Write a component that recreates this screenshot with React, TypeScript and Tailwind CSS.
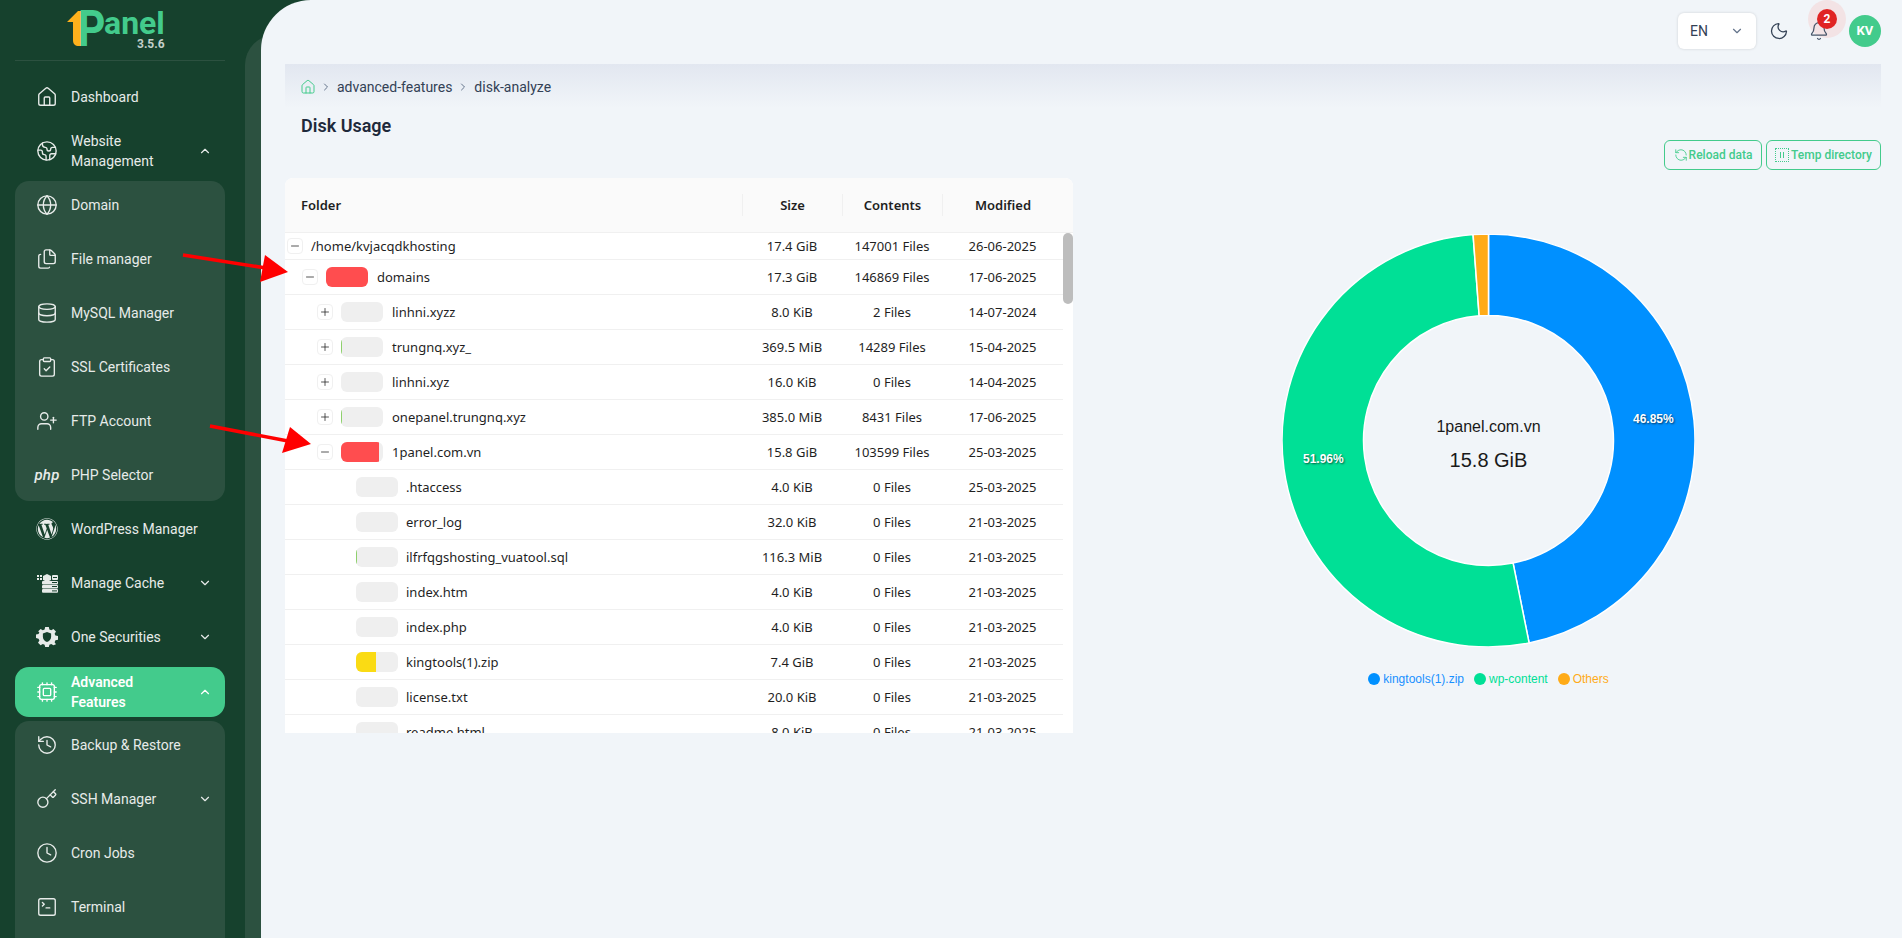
import { useState } from "react";
import {
  House,
  Earth,
  Globe,
  Files,
  Database,
  ClipboardCheck,
  UserPlus,
  ChevronDown,
  ChevronUp,
  ChevronRight,
  Cpu,
  History,
  Key,
  Clock,
  SquareTerminal,
  Moon,
  Bell,
  RefreshCcw,
  Plus,
  Minus,
} from "lucide-react";
import { FaWordpress } from "react-icons/fa";

function CacheIcon() {
  return (
    <svg viewBox="0 0 21 19" className="w-[21px] h-[19px]" fill="currentColor">
      <rect x="0" y="1" width="2" height="2" />
      <rect x="0" y="4" width="2" height="2" />
      <rect x="3" y="1" width="2" height="2" />
      <rect x="3" y="4" width="2" height="2" />
      <path d="M10 0l4 2v4l-4 2-4-2V2z" />
      <rect x="15" y="1" width="6" height="5" rx="1" />
      <rect x="5" y="7" width="16" height="3.4" rx="1" />
      <rect x="5" y="11" width="16" height="3.4" rx="1" />
      <rect x="5" y="15" width="16" height="3.8" rx="1" />
      <g fill="#16412d">
        <rect x="16" y="3" width="4" height="1" />
        <rect x="15" y="8" width="5" height="1" />
        <rect x="15" y="12" width="5" height="1" />
        <rect x="15" y="16.4" width="5" height="1" />
      </g>
    </svg>
  );
}

function SecurityIcon() {
  return (
    <svg viewBox="-1 -1 24 24" className="w-[22px] h-[22px]" fill="currentColor">
      <path
        fillRule="evenodd"
        d="M9 0h4l.6 2.8 2 .9L18 2.2l2.8 2.8-1.5 2.4.9 2 2.8.6v4l-2.8.6-.9 2 1.5 2.4L18 20l-2.4-1.5-2 .9L13 22H9l-.6-2.6-2-.9L4 20l-2.8-2.8 1.5-2.4-.9-2L-1 12.2v-4l2.8-.6.9-2L1.2 5 4 2.2l2.4 1.5 2-.9L9 0zm2 5.5-4.5 1.7v3.6c0 2.8 1.9 4.7 4.5 5.7 2.6-1 4.5-2.9 4.5-5.7V7.2L11 5.5z"
      />
    </svg>
  );
}

type NavItem = {
  label: string;
  icon: React.ReactNode;
  chevron?: "up" | "down";
  active?: boolean;
  wrap?: boolean;
};

const iconCls = "w-[22px] h-[22px]";

const websiteSub: NavItem[] = [
  { label: "Domain", icon: <Globe className={iconCls} strokeWidth={1.5} /> },
  { label: "File manager", icon: <Files className={iconCls} strokeWidth={1.5} /> },
  { label: "MySQL Manager", icon: <Database className={iconCls} strokeWidth={1.5} /> },
  { label: "SSL Certificates", icon: <ClipboardCheck className={iconCls} strokeWidth={1.5} /> },
  { label: "FTP Account", icon: <UserPlus className={iconCls} strokeWidth={1.5} /> },
  {
    label: "PHP Selector",
    icon: <span className="italic font-medium text-[15px] tracking-[0.2px]">php</span>,
  },
];

const advancedSub: NavItem[] = [
  { label: "Backup & Restore", icon: <History className={iconCls} strokeWidth={1.5} /> },
  { label: "SSH Manager", icon: <Key className={iconCls} strokeWidth={1.5} />, chevron: "down" },
  { label: "Cron Jobs", icon: <Clock className={iconCls} strokeWidth={1.5} /> },
  { label: "Terminal", icon: <SquareTerminal className={iconCls} strokeWidth={1.5} /> },
];

function NavRow({ item }: { item: NavItem }) {
  return (
    <div
      className={`flex items-center h-[54px] shrink-0 pl-[20px] pr-[13px] text-[14px] leading-[20px] ${
        item.active ? "text-white font-semibold" : "text-[#e7ebe9]"
      }`}
    >
      <span className="w-[24px] flex justify-center shrink-0">{item.icon}</span>
      <span className="ml-[12px] flex-1">
        <span className={item.wrap ? "block w-[100px]" : ""}>{item.label}</span>
      </span>
      {item.chevron === "up" && <ChevronUp className="w-[14px] h-[14px]" />}
      {item.chevron === "down" && <ChevronDown className="w-[14px] h-[14px]" />}
    </div>
  );
}

function Sidebar() {
  return (
    <aside className="w-[261px] shrink-0 h-[938px] overflow-hidden bg-[#16412d] font-['Roboto',sans-serif] relative">
      {/* Logo */}
      <div className="h-[61px] mx-[15px] w-[210px] border-b border-[#2c5140] pl-[52px] pt-[8px]">
        <div className="relative w-[100px] h-[44px]">
          <svg viewBox="0 0 14 36" className="absolute left-0 top-[2px] w-[14px] h-[36px]">
            <path d="M0 12 L11 1 L14 1 L14 36 L12 36 C8 36 6 34 6 30 L6 12 Z" fill="#feb11c" />
          </svg>
          <span className="absolute left-[11px] top-[-7px] text-[50px] leading-[56px] font-bold text-[#43cb8c] origin-left scale-x-[0.85]">
            P
          </span>
          <span className="absolute left-[37px] top-[1px] text-[32px] leading-[28px] font-bold text-[#43cb8c]">
            anel
          </span>
          <span className="absolute left-[70px] top-[30px] text-[12px] leading-[12px] font-bold text-[#c4cfca]">
            3.5.6
          </span>
        </div>
      </div>
      {/* Navigation */}
      <nav className="w-[240px] px-[15px] mt-[9px]">
        <NavRow item={{ label: "Dashboard", icon: <House className={iconCls} strokeWidth={1.5} /> }} />
        <NavRow
          item={{ label: "Website Management", icon: <Earth className={iconCls} strokeWidth={1.5} />, chevron: "up", wrap: true }}
        />
        <div className="bg-[#2c5140] rounded-[14px] mt-[3px] h-[320px] mb-[1px] flex flex-col">
          <div className="-mt-[3px]">
            {websiteSub.map((item) => (
              <NavRow key={item.label} item={item} />
            ))}
          </div>
        </div>
        <NavRow item={{ label: "WordPress Manager", icon: <FaWordpress className={iconCls} /> }} />
        <NavRow item={{ label: "Manage Cache", icon: <CacheIcon />, chevron: "down" }} />
        <NavRow item={{ label: "One Securities", icon: <SecurityIcon />, chevron: "down" }} />
        <div className="bg-[#43cb8c] rounded-[14px] h-[50px] mt-[3px] flex flex-col justify-center">
          <NavRow
            item={{
              label: "Advanced Features",
              icon: <Cpu className={iconCls} strokeWidth={1.5} />,
              chevron: "up",
              active: true,
              wrap: true,
            }}
          />
        </div>
        <div className="bg-[#2c5140] rounded-t-[14px] mt-[4px] h-[217px] flex flex-col">
          <div className="-mt-[3px]">
            {advancedSub.map((item) => (
              <NavRow key={item.label} item={item} />
            ))}
          </div>
        </div>
      </nav>
    </aside>
  );
}

type Row = {
  name: string;
  depth: number;
  toggle?: "plus" | "minus";
  size: string;
  contents: string;
  modified: string;
  pct?: number;
  barColor?: string;
  noBar?: boolean;
};

const rows: Row[] = [
  { name: "/home/kvjacqdkhosting", depth: 0, toggle: "minus", size: "17.4 GiB", contents: "147001 Files", modified: "26-06-2025", noBar: true },
  { name: "domains", depth: 1, toggle: "minus", size: "17.3 GiB", contents: "146869 Files", modified: "17-06-2025", pct: 100, barColor: "bg-[#ff4d4f]" },
  { name: "linhni.xyzz", depth: 2, toggle: "plus", size: "8.0 KiB", contents: "2 Files", modified: "14-07-2024" },
  { name: "trungnq.xyz_", depth: 2, toggle: "plus", size: "369.5 MiB", contents: "14289 Files", modified: "15-04-2025", pct: 2, barColor: "bg-[#8ed06c]" },
  { name: "linhni.xyz", depth: 2, toggle: "plus", size: "16.0 KiB", contents: "0 Files", modified: "14-04-2025" },
  { name: "onepanel.trungnq.xyz", depth: 2, toggle: "plus", size: "385.0 MiB", contents: "8431 Files", modified: "17-06-2025", pct: 2, barColor: "bg-[#8ed06c]" },
  { name: "1panel.com.vn", depth: 2, toggle: "minus", size: "15.8 GiB", contents: "103599 Files", modified: "25-03-2025", pct: 91, barColor: "bg-[#ff4d4f]" },
  { name: ".htaccess", depth: 3, size: "4.0 KiB", contents: "0 Files", modified: "25-03-2025" },
  { name: "error_log", depth: 3, size: "32.0 KiB", contents: "0 Files", modified: "21-03-2025" },
  { name: "ilfrfqgshosting_vuatool.sql", depth: 3, size: "116.3 MiB", contents: "0 Files", modified: "21-03-2025", pct: 2, barColor: "bg-[#8ed06c]" },
  { name: "index.htm", depth: 3, size: "4.0 KiB", contents: "0 Files", modified: "21-03-2025" },
  { name: "index.php", depth: 3, size: "4.0 KiB", contents: "0 Files", modified: "21-03-2025" },
  { name: "kingtools(1).zip", depth: 3, size: "7.4 GiB", contents: "0 Files", modified: "21-03-2025", pct: 47, barColor: "bg-[#fadb14]" },
  { name: "license.txt", depth: 3, size: "20.0 KiB", contents: "0 Files", modified: "21-03-2025" },
  { name: "readme.html", depth: 3, size: "8.0 KiB", contents: "0 Files", modified: "21-03-2025" },
];

function TableRow({ row }: { row: Row }) {
  const first = row.depth === 0;
  return (
    <div
      className={`flex items-center border-b border-[#f0f0f0] text-[#1f1f1f] ${first ? "h-[27px]" : "h-[35px]"}`}
    >
      <div className="w-[457px] flex items-center shrink-0 pl-[2px]">
        <span style={{ width: row.depth * 15 }} className="shrink-0" />
        {row.toggle ? (
          <span className="w-[16px] h-[16px] rounded-[4px] border border-[#f0f0f0] bg-white flex items-center justify-center shrink-0 text-[#1f1f1f]">
            {row.toggle === "plus" ? (
              <Plus className="w-[12px] h-[12px]" strokeWidth={1.5} />
            ) : (
              <Minus className="w-[12px] h-[12px]" strokeWidth={1.5} />
            )}
          </span>
        ) : (
          <span className="w-[16px] shrink-0" />
        )}
        {row.noBar ? (
          <span className="ml-[8px]">{row.name}</span>
        ) : (
          <>
            <span className="ml-[8px] w-[42px] h-[20px] rounded-[6px] bg-[#efefef] overflow-hidden shrink-0">
              {row.pct ? (
                <span style={{ width: `${row.pct}%` }} className={`block h-full ${row.barColor}`} />
              ) : null}
            </span>
            <span className={row.depth === 3 ? "ml-[8px]" : "ml-[9px]"}>{row.name}</span>
          </>
        )}
      </div>
      <div className="w-[100px] text-center shrink-0">{row.size}</div>
      <div className="w-[100px] text-center shrink-0">{row.contents}</div>
      <div className="flex-1 text-center">{row.modified}</div>
    </div>
  );
}

function HeaderCell({ label, className }: { label: string; className: string }) {
  return (
    <div className={`h-[22px] flex items-center border-l border-[#f0f0f0] ${className}`}>{label}</div>
  );
}

function DiskTable() {
  return (
    <div className="w-[788px] h-[555px] rounded-t-[8px] overflow-hidden bg-white text-[13px] leading-[20px] font-['Noto_Sans',sans-serif] relative">
      <div className="h-[55px] bg-[#fafafa] border-b border-[#f0f0f0] flex items-center font-semibold text-[#1f1f1f]">
        <div className="w-[457px] pl-[16px]">Folder</div>
        <HeaderCell label="Size" className="w-[100px] justify-center" />
        <HeaderCell label="Contents" className="w-[100px] justify-center" />
        <HeaderCell label="Modified" className="w-[121px] justify-center" />
      </div>
      <div className="w-[778px]">
        {rows.map((row) => (
          <TableRow key={row.name} row={row} />
        ))}
      </div>
      <div className="absolute right-0 top-[55px] w-[10px] h-[71px] rounded-[5px] bg-[#bdbdbd]" />
    </div>
  );
}

function polar(r: number, frac: number) {
  const a = frac * 2 * Math.PI - Math.PI / 2;
  return [206.5 + r * Math.cos(a), 206.5 + r * Math.sin(a)];
}

function arc(from: number, to: number) {
  const R = 206.5;
  const r = 125;
  const [x1, y1] = polar(R, from);
  const [x2, y2] = polar(R, to);
  const [x3, y3] = polar(r, to);
  const [x4, y4] = polar(r, from);
  const large = to - from > 0.5 ? 1 : 0;
  return `M${x1} ${y1}A${R} ${R} 0 ${large} 1 ${x2} ${y2}L${x3} ${y3}A${r} ${r} 0 ${large} 0 ${x4} ${y4}Z`;
}

function Donut() {
  const labelCls =
    "absolute text-[12px] leading-[14px] font-bold text-white [text-shadow:1px_1px_2px_rgba(0,0,0,0.6)]";
  return (
    <div className="flex flex-col items-center font-['Liberation_Sans',sans-serif]">
      <div className="relative w-[413px] h-[413px]">
        <svg viewBox="0 0 413 413" className="w-[413px] h-[413px]">
          <path d={arc(0, 0.4685)} fill="#0090ff" stroke="#fff" strokeWidth="1.5" />
          <path d={arc(0.4685, 0.9881)} fill="#00e096" stroke="#fff" strokeWidth="1.5" />
          <path d={arc(0.9881, 1)} fill="#ffab18" stroke="#fff" strokeWidth="1.5" />
        </svg>
        <div className="absolute inset-0 flex flex-col items-center justify-center pt-[7px] text-[#1a1a1a]">
          <div className="text-[16px] leading-[20px]">1panel.com.vn</div>
          <div className="text-[20px] leading-[24px] mt-[11px]">15.8 GiB</div>
        </div>
        <span className={`${labelCls} left-[351px] top-[178px]`}>46.85%</span>
        <span className={`${labelCls} left-[21px] top-[218px]`}>51.96%</span>
      </div>
      <div className="flex items-center gap-[10px] text-[12px] leading-[16px] mt-[24px]">
        <span className="flex items-center gap-[3px] text-[#1890ff]">
          <span className="w-[12px] h-[12px] rounded-full bg-[#0090ff]" />
          kingtools(1).zip
        </span>
        <span className="flex items-center gap-[3px] text-[#00e096]">
          <span className="w-[12px] h-[12px] rounded-full bg-[#00e096]" />
          wp-content
        </span>
        <span className="flex items-center gap-[3px] text-[#ffab18]">
          <span className="w-[12px] h-[12px] rounded-full bg-[#ffab18]" />
          Others
        </span>
      </div>
    </div>
  );
}

function Arrows() {
  return (
    <svg className="absolute inset-0 pointer-events-none z-20 w-[1902px] h-[938px]" viewBox="0 0 1902 938">
      <line x1="183" y1="255" x2="266" y2="268" stroke="#ff0000" strokeWidth="3.5" />
      <polygon points="265,255 288,272 260,282" fill="#ff0000" />
      <line x1="210" y1="426" x2="288" y2="441" stroke="#ff0000" strokeWidth="3.5" />
      <polygon points="290,427 311,444 282,453" fill="#ff0000" />
    </svg>
  );
}

export default function App() {
  const [lang] = useState("EN");
  return (
    <div className="relative w-[1902px] h-[938px] overflow-hidden flex bg-[#16412d]">
      <Sidebar />
      {/* strip behind the main panel */}
      <div className="absolute left-[245px] top-[35px] w-[60px] h-[903px] bg-[#2c5140] rounded-tl-[30px]" />
      <main className="relative z-10 flex-1 bg-[#f1f5f9] rounded-tl-[50px] pl-[24px] pr-[21px] font-['Roboto',sans-serif] text-[#1e293b]">
        {/* Top bar */}
        <div className="h-[62px] flex items-center justify-end">
          <div className="w-[78px] h-[36px] bg-white rounded-[6px] shadow-[0_0_3px_rgba(0,0,0,0.15)] flex items-center justify-between pl-[12px] pr-[12px] text-[14px] text-[#334155]">
            {lang}
            <ChevronDown className="w-[14px] h-[14px] text-[#64748b]" />
          </div>
          <Moon className="ml-[13px] w-[20px] h-[20px] text-[#334155]" strokeWidth={1.5} />
          <div className="relative ml-[20px] w-[20px] h-[20px]">
            <div className="absolute left-[-1px] top-[-21px] w-[38px] h-[38px] rounded-full bg-[#f3e3e5]" />
            <Bell className="absolute inset-0 w-[20px] h-[20px] text-[#475569]" strokeWidth={1.5} />
            <span className="absolute left-[8px] top-[-12px] w-[20px] h-[20px] rounded-full bg-[#e02424] text-white text-[12px] font-bold flex items-center justify-center">
              2
            </span>
          </div>
          <div className="ml-[20px] w-[32px] h-[32px] rounded-full bg-[#43cb8c] text-white text-[13px] font-bold flex items-center justify-center">
            KV
          </div>
        </div>
        {/* Breadcrumb */}
        <div className="mt-[2px] h-[44px] pt-[2px] bg-gradient-to-b from-[#e2e7f0] to-[#f1f5f9] flex items-center pl-[15px] text-[14px] text-[#334155]">
          <House className="w-[16px] h-[16px] text-[#43cb8c]" strokeWidth={1.5} />
          <ChevronRight className="w-[12px] h-[12px] ml-[4px] mr-[5px] text-[#64748b]" />
          <span>advanced-features</span>
          <ChevronRight className="w-[12px] h-[12px] mx-[5px] text-[#64748b]" />
          <span>disk-analyze</span>
        </div>
        <h1 className="pl-[16px] mt-[4px] text-[18px] leading-[28px] font-semibold text-[#1e293b]">
          Disk Usage
        </h1>
        {/* Actions */}
        <div className="flex justify-end gap-[4px] h-[30px] text-[12px] font-medium text-[#43cb8c]">
          <button className="h-[30px] w-[98px] rounded-[6px] border border-[#43cb8c] flex items-center justify-center gap-[1px]">
            <RefreshCcw className="w-[14px] h-[14px]" strokeWidth={1.5} />
            Reload data
          </button>
          <button className="h-[30px] w-[115px] rounded-[6px] border border-[#43cb8c] flex items-center justify-center gap-[2px]">
            <span className="w-[14px] h-[14px] border border-dotted border-[#43cb8c] flex items-center justify-center gap-[2px]">
              <span className="w-[1px] h-[6px] bg-[#43cb8c]" />
              <span className="w-[1px] h-[6px] bg-[#43cb8c]" />
            </span>
            Temp directory
          </button>
        </div>
        <div className="flex mt-[8px]">
          <DiskTable />
          <div className="ml-[209px] mt-[56px]">
            <Donut />
          </div>
        </div>
      </main>
      <Arrows />
    </div>
  );
}
